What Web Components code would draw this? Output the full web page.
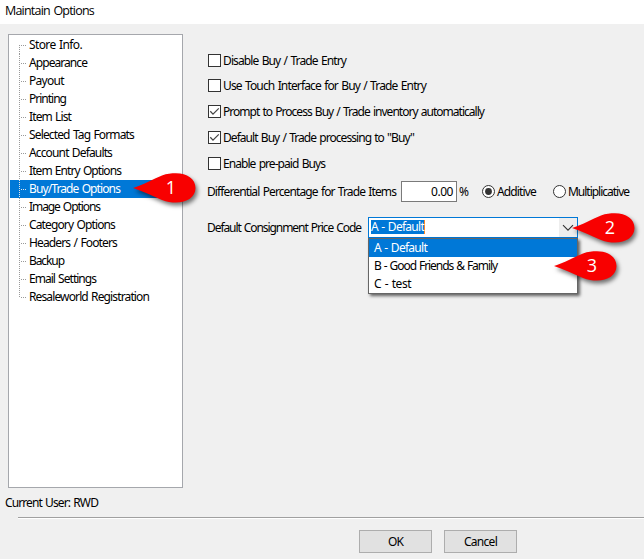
<!DOCTYPE html>
<html lang="en"><head><meta charset="utf-8"><title>Maintain Options</title>
<style>html,body{margin:0;width:644px;height:559px;overflow:hidden;background:#f0f0f0}</style></head>
<body><options-window></options-window>
<script>
const define = (name, html, setup) => customElements.define(name, class extends HTMLElement {
  connectedCallback() {
    if (this.shadowRoot) return;
    const t = document.createElement('template');
    t.innerHTML = html;
    this.attachShadow({mode: 'open'}).append(t.content.cloneNode(true));
    if (setup) setup(this, this.shadowRoot);
  }
});

// A single line of text whose tracking is adjusted to a given advance width.
define('ui-text', `<style>:host{display:block;flex:none;white-space:pre}span{display:inline-block}</style><span><slot></slot></span>`, (el, root) => {
  const w = +el.getAttribute('w');
  if (!w) return;
  el.style.width = w + 'px';
  const s = root.querySelector('span');
  const n = el.textContent.length;
  s.style.letterSpacing = (w - s.getBoundingClientRect().width) / n + 'px';
});

define('tree-item', `<style>
:host{display:flex;height:18px;line-height:18px;align-items:center;padding-left:9px}
:host([selected]){background:#0078d7;color:#fff}
.v{width:1px;height:18px;background:repeating-linear-gradient(#999 0 1px,transparent 1px 2px)}
:host([first]) .v{height:9px;align-self:flex-end}
:host([last]) .v{height:9px;align-self:flex-start}
.h{width:7px;height:1px;margin-right:2px;background:repeating-linear-gradient(90deg,transparent 0 1px,#999 1px 2px)}
:host([selected]) .v,:host([selected]) .h{filter:brightness(1.5)}
</style><div class="v"></div><div class="h"></div><slot></slot>`);

define('tree-list', `<style>:host{display:block;box-sizing:border-box;width:175px;height:454px;border:1px solid #a5a7ac;background:#fff;padding:1px 0 0 1px}</style><slot></slot>`);

define('check-box', `<style>
:host{display:flex;height:13px;align-items:center;gap:2px}
svg{width:13px;height:13px;flex:none}path{display:none}:host([checked]) path{display:block}
</style><svg viewBox="0 0 13 13"><rect x=".5" y=".5" width="12" height="12" fill="#fff" stroke="#333"/><path d="M2.3 6.3 5 9.2 10.8 3.4" fill="none" stroke="#444" stroke-width="1.25"/></svg><slot></slot>`);

define('radio-button', `<style>
:host{display:flex;height:13px;align-items:center;gap:2px}
svg{width:13px;height:13px;flex:none}.d{display:none}:host([checked]) .d{display:block}
</style><svg viewBox="0 0 13 13"><circle cx="6.5" cy="6.5" r="6" fill="#fff" stroke="#333"/><circle class="d" cx="6.5" cy="6.5" r="3.4" fill="#333"/></svg><slot></slot>`);

define('number-field', `<style>:host{display:flex;box-sizing:border-box;width:56px;height:21px;border:1px solid #7a7a7a;background:#fff;justify-content:flex-end;align-items:center;padding-right:3px}</style><slot></slot>`);

define('combo-option', `<style>:host{display:flex;height:18px;align-items:center;padding-left:5px}:host([selected]){background:#0078d7;color:#fff}</style><slot></slot>`);

define('combo-box', `<style>
:host{display:block;width:210px}
.field{box-sizing:border-box;height:21px;border:1px solid #0078d7;background:#fff;display:flex;padding:0 0 0 2px;justify-content:space-between}
.value{height:14px;line-height:14px;margin-top:2px;background:#0078d7;color:#fff;border-right:1px solid #ff8728;display:flex;align-items:center}
.arrow{width:18px;background:#eee;display:flex;align-items:center;justify-content:center}
.list{border:1px solid #666;background:#fff;box-shadow:2px 2px 3px #0009}
</style><div class="field"><div class="value"><slot name="value"></slot></div><div class="arrow"><svg width="12" height="8" viewBox="0 0 12 8"><path d="M1 1.2 6 6.2 11 1.2" fill="none" stroke="#333" stroke-width="1.1"/></svg></div></div><div class="list"><slot></slot></div>`);

define('push-button', `<style>:host{display:flex;box-sizing:border-box;width:73px;height:23px;border:1px solid #adadad;background:#e1e1e1;align-items:center;justify-content:center}</style><slot></slot>`);

// Numbered teardrop marker; its point sits at the element's left edge.
define('callout-pin', `<style>
:host{position:absolute;width:63px;height:30px;color:#fff;font:500 18px/29px "Open Sans",sans-serif}
svg{display:block;overflow:visible;filter:drop-shadow(2px 3px 2px #0008)}
span{position:absolute;left:0;top:0;width:76px;text-align:center}
</style><svg width="63" height="30" viewBox="0 0 63 30"><path d="M0 15C10 12 20 6 29 2.5C34 .6 38 .3 43 .3C54 .3 62.5 6 62.5 15S54 29.5 43 29.5C38 29.5 34 29 29 27C20 23.5 10 18 0 15Z" fill="#f80000"/></svg><span><slot></slot></span>`);

define('options-window', `<style>
:host{display:grid;position:relative;width:644px;height:559px;grid-template-rows:24px 464px 29px 2px 40px;background:#f0f0f0;color:#000;font:12px/16px "Noto Sans",sans-serif;word-spacing:1px;overflow:hidden}
header{background:#fff;padding:0 0 0 5px;font:12.5px/22px "Open Sans",sans-serif}
main{display:grid;grid-template-columns:175px 1fr;column-gap:25px;padding:10px 0 0 8px}
section{display:flex;flex-direction:column;align-items:flex-start;padding-top:20px}
check-box:nth-of-type(1){margin-bottom:12px}
check-box:nth-of-type(n+2){margin-bottom:13px}
.pct{display:flex;align-items:center;margin-top:-2px;margin-left:-1px;height:21px}
.pct number-field{margin-left:5px;margin-right:2px}
.pct radio-button:nth-of-type(1){margin-left:13px}
.pct radio-button:nth-of-type(2){margin-left:17px}
.code{display:flex;align-items:flex-start;margin-top:15px;margin-left:-1px;gap:7px}
.code>ui-text{line-height:21px}
.user{padding:7px 0 0 5px}
hr{margin:0 0 0 18px;border:0;height:1px;background:#a0a0a0;border-bottom:1px solid #fff}
footer{display:flex;gap:12px;padding:11px 0 0 359px}
</style>
<header><ui-text w="89">Maintain Options</ui-text></header>
<main><tree-list>
<tree-item first><ui-text w="53">Store Info.</ui-text></tree-item>
<tree-item><ui-text w="58">Appearance</ui-text></tree-item>
<tree-item><ui-text w="35">Payout</ui-text></tree-item>
<tree-item><ui-text w="37">Printing</ui-text></tree-item>
<tree-item><ui-text w="42">Item List</ui-text></tree-item>
<tree-item><ui-text w="105">Selected Tag Formats</ui-text></tree-item>
<tree-item><ui-text w="83">Account Defaults</ui-text></tree-item>
<tree-item><ui-text w="92">Item Entry Options</ui-text></tree-item>
<tree-item selected><ui-text w="91">Buy/Trade Options</ui-text></tree-item>
<tree-item><ui-text w="71">Image Options</ui-text></tree-item>
<tree-item><ui-text w="86">Category Options</ui-text></tree-item>
<tree-item><ui-text w="88">Headers / Footers</ui-text></tree-item>
<tree-item><ui-text w="35">Backup</ui-text></tree-item>
<tree-item><ui-text w="67">Email Settings</ui-text></tree-item>
<tree-item last><ui-text w="120">Resaleworld Registration</ui-text></tree-item>
</tree-list>
<section>
<check-box><ui-text w="123">Disable Buy / Trade Entry</ui-text></check-box>
<check-box><ui-text w="203">Use Touch Interface for Buy / Trade Entry</ui-text></check-box>
<check-box checked><ui-text w="261">Prompt to Process Buy / Trade inventory automatically</ui-text></check-box>
<check-box checked><ui-text w="191">Default Buy / Trade processing to "Buy"</ui-text></check-box>
<check-box><ui-text w="102">Enable pre-paid Buys</ui-text></check-box>
<div class="pct"><ui-text w="189">Differential Percentage for Trade Items</ui-text><number-field><ui-text w="22">0.00</ui-text></number-field><ui-text w="10">%</ui-text><radio-button checked><ui-text w="39">Additive</ui-text></radio-button><radio-button><ui-text w="61">Multiplicative</ui-text></radio-button></div>
<div class="code"><ui-text w="154">Default Consignment Price Code</ui-text><combo-box><ui-text slot="value" w="53">A - Default</ui-text>
<combo-option selected><ui-text w="53">A - Default</ui-text></combo-option><combo-option><ui-text w="123">B - Good Friends &amp; Family</ui-text></combo-option><combo-option><ui-text w="37">C - test</ui-text></combo-option></combo-box></div>
</section></main>
<div class="user"><ui-text w="93">Current User: RWD</ui-text></div>
<hr>
<footer><push-button><ui-text w="15">OK</ui-text></push-button><push-button><ui-text w="33">Cancel</ui-text></push-button></footer>
<callout-pin style="left:133px;top:173px">1</callout-pin>
<callout-pin style="left:572px;top:213px">2</callout-pin>
<callout-pin style="left:554px;top:251px">3</callout-pin>`);
</script></body></html>
